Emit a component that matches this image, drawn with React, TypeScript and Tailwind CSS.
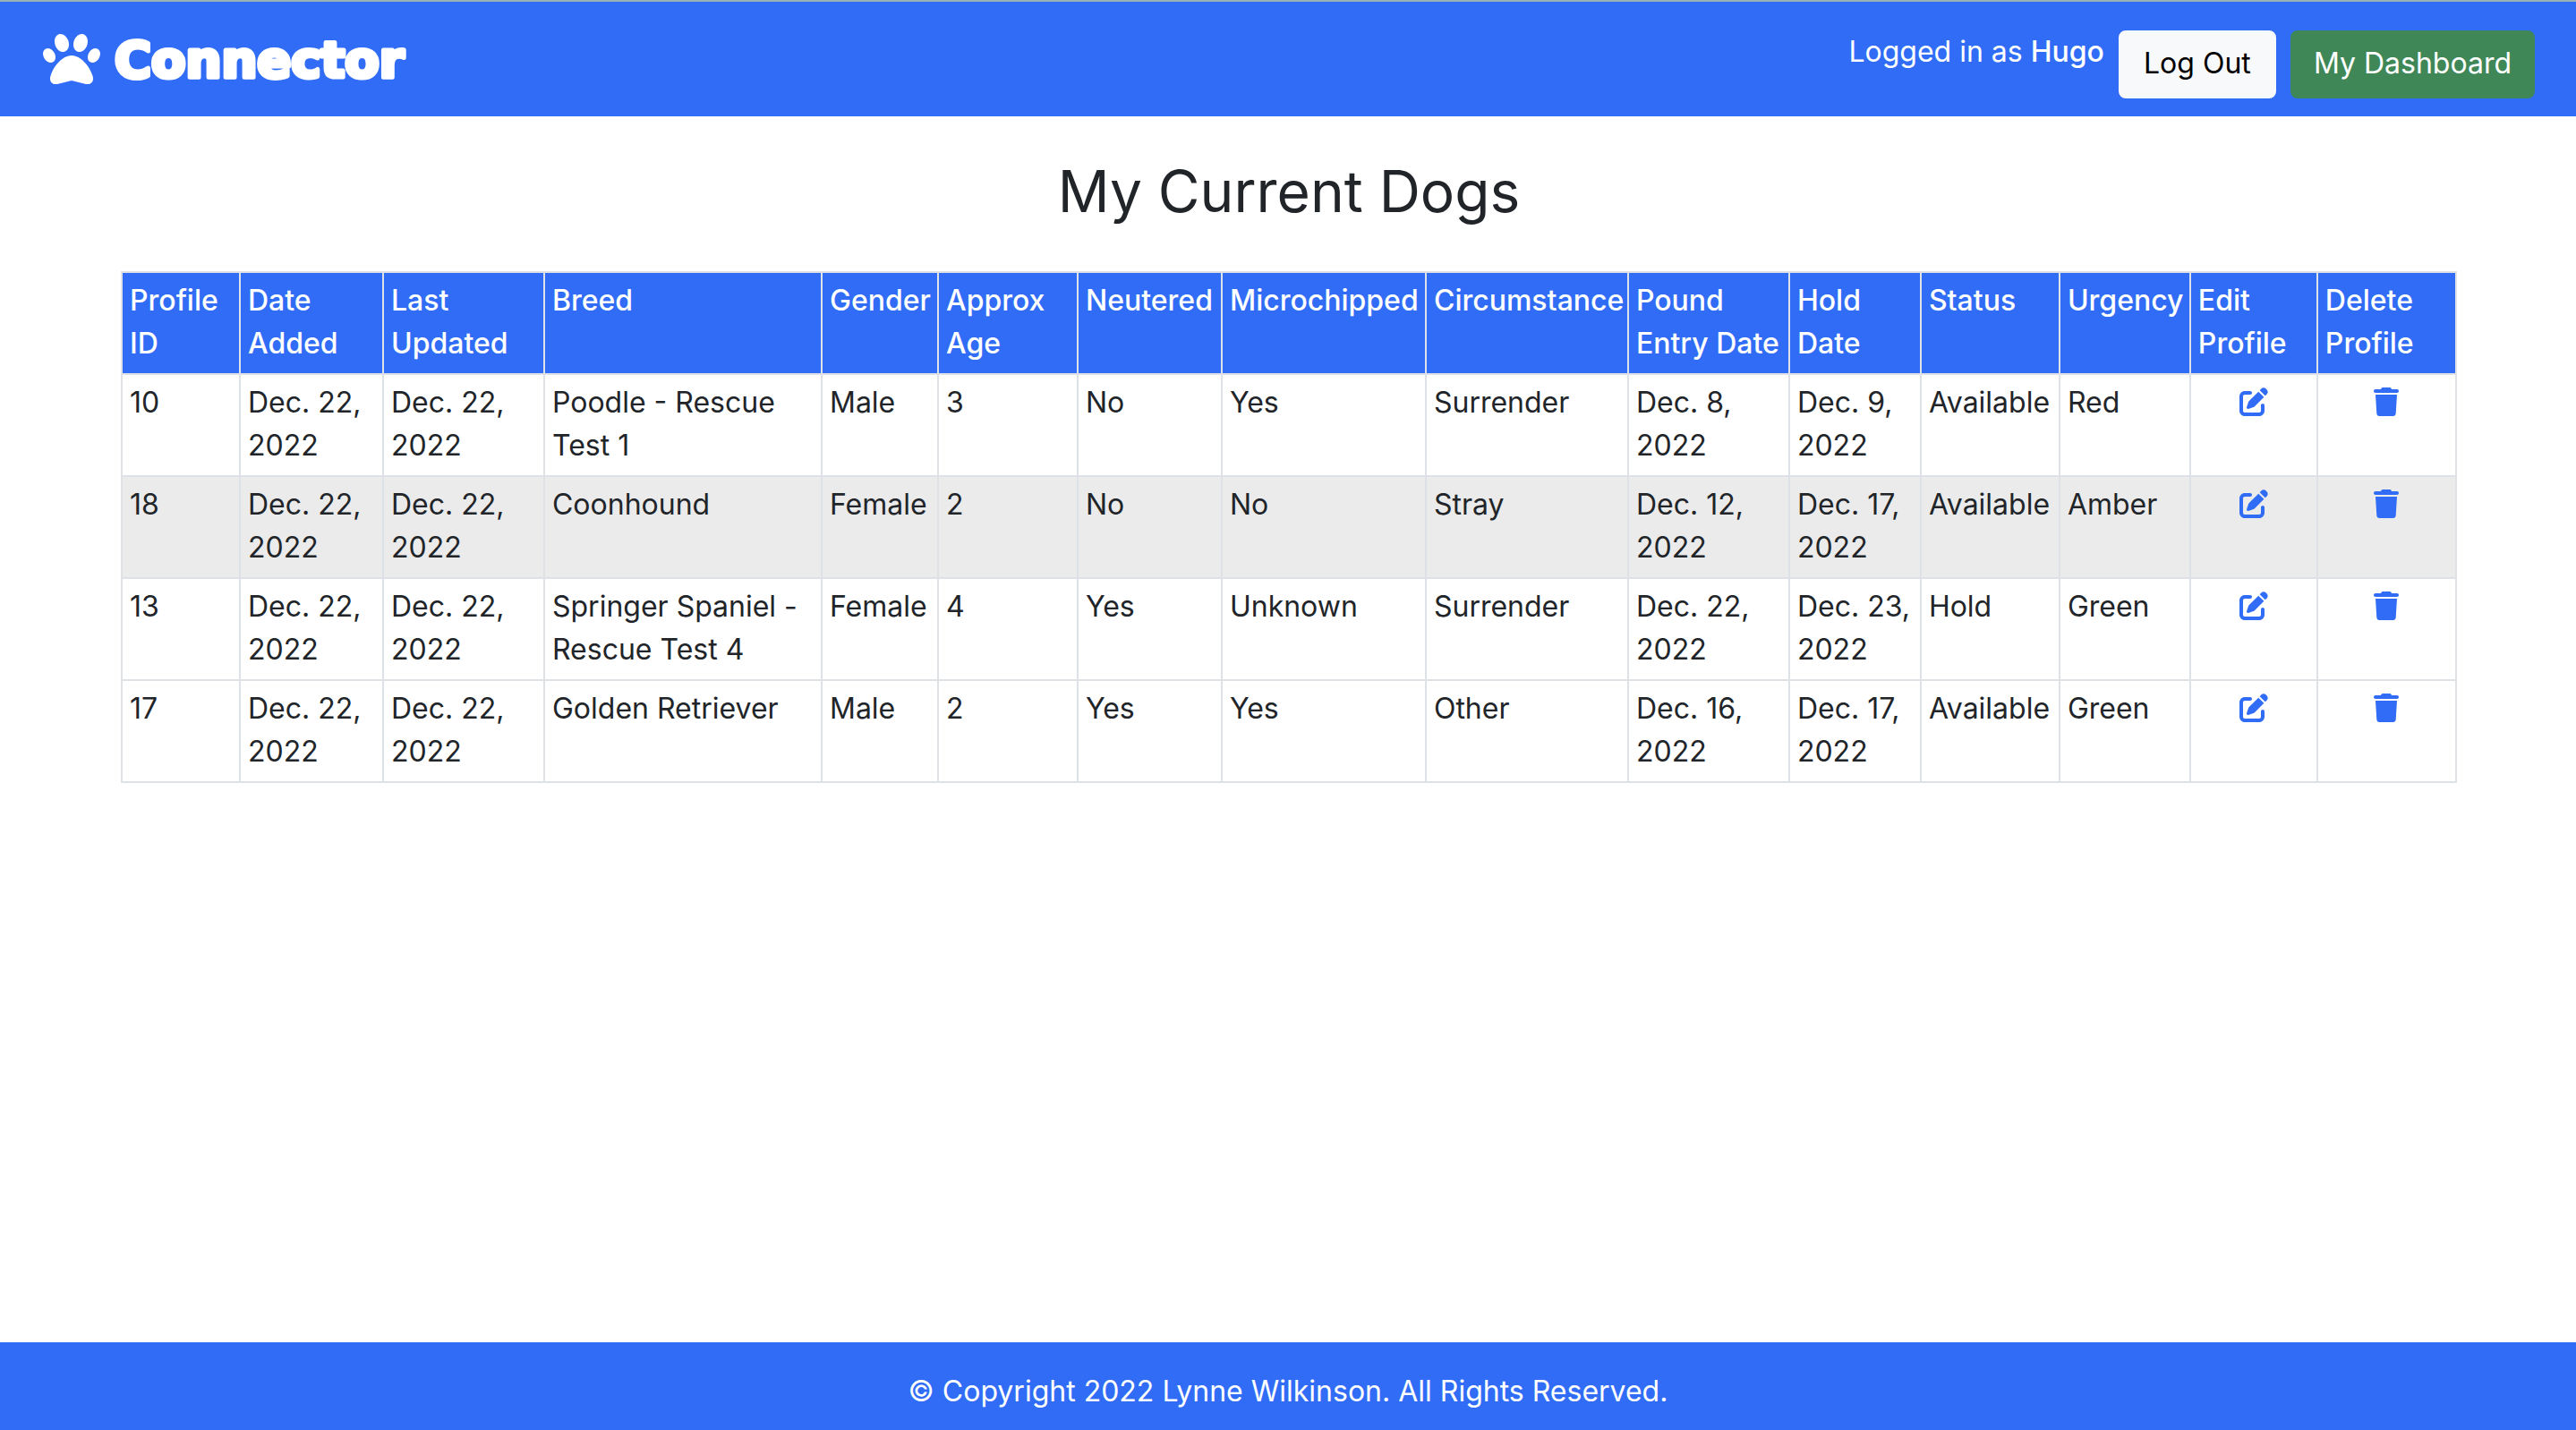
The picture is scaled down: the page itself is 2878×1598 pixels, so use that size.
import { FaPaw, FaPenToSquare, FaTrash } from "react-icons/fa6";

const columns = [
  { label: "Profile ID", share: 132 },
  { label: "Date Added", share: 160 },
  { label: "Last Updated", share: 180 },
  { label: "Breed", share: 310 },
  { label: "Gender", share: 130 },
  { label: "Approx Age", share: 156 },
  { label: "Neutered", share: 161 },
  { label: "Microchipped", share: 228 },
  { label: "Circumstance", share: 226 },
  { label: "Pound Entry Date", share: 180 },
  { label: "Hold Date", share: 147 },
  { label: "Status", share: 155 },
  { label: "Urgency", share: 146 },
  { label: "Edit Profile", share: 142 },
  { label: "Delete Profile", share: 155 },
];

const totalShare = columns.reduce((sum, column) => sum + column.share, 0);

const highlightedId = "18";

const dogs = [
  ["10", "Dec. 22, 2022", "Dec. 22, 2022", "Poodle - Rescue Test 1", "Male", "3", "No", "Yes", "Surrender", "Dec. 8, 2022", "Dec. 9, 2022", "Available", "Red"],
  ["18", "Dec. 22, 2022", "Dec. 22, 2022", "Coonhound", "Female", "2", "No", "No", "Stray", "Dec. 12, 2022", "Dec. 17, 2022", "Available", "Amber"],
  ["13", "Dec. 22, 2022", "Dec. 22, 2022", "Springer Spaniel - Rescue Test 4", "Female", "4", "Yes", "Unknown", "Surrender", "Dec. 22, 2022", "Dec. 23, 2022", "Hold", "Green"],
  ["17", "Dec. 22, 2022", "Dec. 22, 2022", "Golden Retriever", "Male", "2", "Yes", "Yes", "Other", "Dec. 16, 2022", "Dec. 17, 2022", "Available", "Green"],
];

const cell = "border-2 border-[#dee2e6] px-2 pt-[7px] pb-[9px] text-left align-top";
const iconLink = "flex justify-center pt-[7px] text-[#306cf6]";
const button = "rounded-lg border-2 px-6 pt-[11px] pb-[13px]";

function Header() {
  return (
    <header className="flex items-start justify-between border-t-2 border-[#98b2b5] bg-[#306cf6] pr-[46px] pb-5 pl-12 pt-8 text-white">
      <a href="#home" className="flex items-center gap-4" aria-label="Connector home">
        <FaPaw className="size-16" />
        <svg className="h-16 w-[330px] overflow-visible" viewBox="0 0 330 64">
          <text
            x="0"
            y="52"
            className="fill-white stroke-white font-['DejaVu_Sans',sans-serif] text-[56px] font-bold"
            strokeWidth="5"
            strokeLinejoin="round"
          >
            Connector
          </text>
        </svg>
      </a>
      <nav className="flex items-start gap-4">
        <p>
          Logged in as <span className="font-medium">Hugo</span>
        </p>
        <button type="button" className={`${button} min-w-[176px] border-[#f8f9fb] bg-[#f8f9fb] text-black`}>
          Log Out
        </button>
        <button type="button" className={`${button} border-[#408758] bg-[#408758] text-white`}>
          My Dashboard
        </button>
      </nav>
    </header>
  );
}

function DogTable() {
  return (
    <table className="w-full table-fixed border-collapse">
      <colgroup>
        {columns.map((column) => (
          <col key={column.label} style={{ width: `${(column.share / totalShare) * 100}%` }} />
        ))}
      </colgroup>
      <thead className="bg-[#306cf6] text-white">
        <tr>
          {columns.map((column) => (
            <th key={column.label} scope="col" className={`${cell} font-medium`}>
              {column.label}
            </th>
          ))}
        </tr>
      </thead>
      <tbody>
        {dogs.map((dog) => (
          <tr key={dog[0]} className={dog[0] === highlightedId ? "bg-[#ebebeb]" : "bg-white"}>
            {dog.map((value, i) => (
              <td key={columns[i].label} className={cell}>
                {value}
              </td>
            ))}
            <td className={cell}>
              <a href={`#edit-${dog[0]}`} aria-label={`Edit profile ${dog[0]}`} className={iconLink}>
                <FaPenToSquare className="size-8" />
              </a>
            </td>
            <td className={cell}>
              <a href={`#delete-${dog[0]}`} aria-label={`Delete profile ${dog[0]}`} className={iconLink}>
                <FaTrash className="size-8" />
              </a>
            </td>
          </tr>
        ))}
      </tbody>
    </table>
  );
}

export default function App() {
  return (
    <div className="flex min-h-screen flex-col bg-white font-['Inter',sans-serif] text-[32px] leading-[48px] text-[#212529]">
      <Header />
      <main className="grow pr-[133px] pl-[135px] pt-[46px]">
        <h1 className="mb-[51px] text-center text-[64px] leading-[76px]">My Current Dogs</h1>
        <DogTable />
      </main>
      <footer className="bg-[#306cf6] pt-[31px] pb-[19px] text-center text-white">
        <p>© Copyright 2022 Lynne Wilkinson. All Rights Reserved.</p>
      </footer>
    </div>
  );
}
